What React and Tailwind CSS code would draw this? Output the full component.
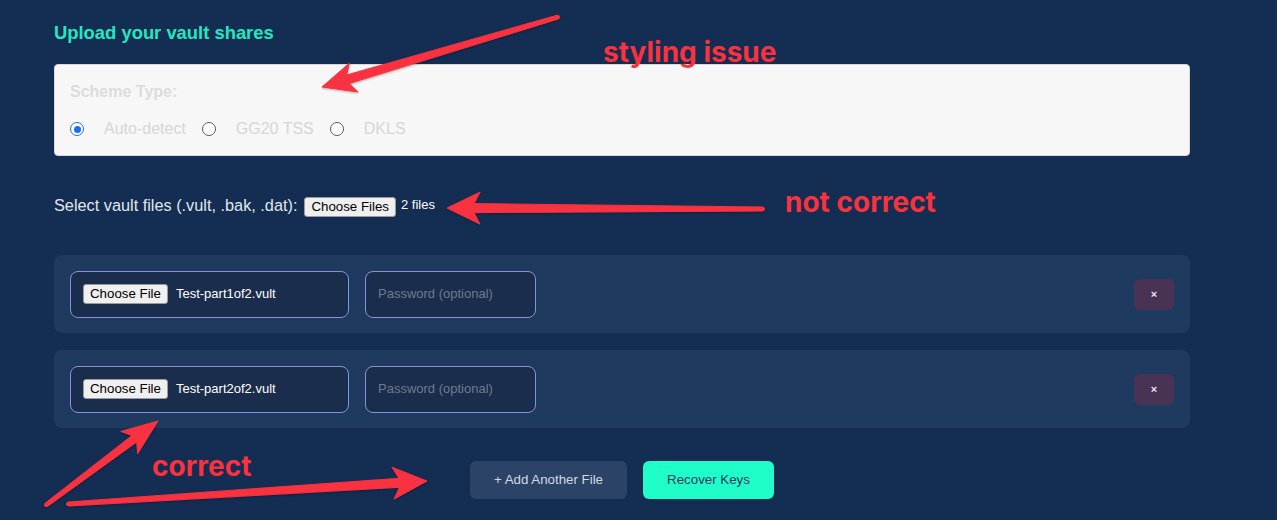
import React from "react";

const rows = [
  { name: "Test-part1of2.vult" },
  { name: "Test-part2of2.vult" },
];

const schemes = [
  { label: "Auto-detect", checked: true },
  { label: "GG20 TSS", checked: false },
  { label: "DKLS", checked: false },
];

// tapered annotation arrow, from tail t to tip p
function arrowPoints(t, p, w0, w1, headLen, headHalf) {
  const dx = p[0] - t[0];
  const dy = p[1] - t[1];
  const len = Math.hypot(dx, dy);
  const d = [dx / len, dy / len];
  const n = [-d[1], d[0]];
  const at = (base, k, s) => [base[0] + d[0] * k + n[0] * s, base[1] + d[1] * k + n[1] * s];
  const pts = [
    at(t, 0, w0 / 2),
    at(p, -headLen * 0.82, w1 / 2),
    at(p, -headLen, headHalf),
    p,
    at(p, -headLen, -headHalf),
    at(p, -headLen * 0.82, -w1 / 2),
    at(t, 0, -w0 / 2),
  ];
  return pts.map((q) => q[0].toFixed(1) + "," + q[1].toFixed(1)).join(" ");
}

const arrows = [
  { t: [558, 17], p: [322, 87], w0: 4, w1: 9, hl: 33, hh: 15 },
  { t: [763, 209], p: [447, 208], w0: 4, w1: 9, hl: 33, hh: 16 },
  { t: [46, 505], p: [158, 421], w0: 4, w1: 8, hl: 36, hh: 14 },
  { t: [68, 504], p: [427, 481], w0: 4, w1: 9, hl: 34, hh: 16 },
];

function FakeFileButton({ children }) {
  return (
    <span className="inline-flex h-[20px] items-center rounded-[3px] border border-[#9a9a9a] bg-[#efefef] px-[6px] text-[13.3px] text-black">
      {children}
    </span>
  );
}

function Radio({ checked }) {
  if (checked) {
    return (
      <span className="flex h-[14px] w-[14px] items-center justify-center rounded-full border-[1.5px] border-[#1a6fef] bg-white">
        <span className="h-[7px] w-[7px] rounded-full bg-[#1a6fef]" />
      </span>
    );
  }
  return <span className="h-[14px] w-[14px] rounded-full border border-[#5c5c5c] bg-white" />;
}

export default function App() {
  return (
    <div
      className="relative min-h-[520px] w-full overflow-hidden bg-[#132d53] pt-[21px] pl-[54px]"
      style={{ fontFamily: '"Liberation Sans", Arial, sans-serif' }}
    >
      <div className="w-[1136px]">
        <h2 className="text-[18.4px] leading-[24px] font-bold text-[#23e8bf]">
          Upload your vault shares
        </h2>

        {/* Scheme type card */}
        <div className="mt-[19px] h-[92px] rounded-[4px] border border-[#d9d9d9] bg-[#f7f7f7] px-[15px] pt-[18px]">
          <div className="text-[16px] leading-[18px] font-bold text-[#dcdcdc]">Scheme Type:</div>
          <div className="mt-[19px] flex h-[18px] items-center gap-4">
            {schemes.map((s) => (
              <label key={s.label} className="flex items-center gap-5">
                <Radio checked={s.checked} />
                <span className="text-[16px] text-[#d6d6d6]">{s.label}</span>
              </label>
            ))}
          </div>
        </div>

        {/* Select files */}
        <div className="mt-[39px] flex h-[20px] items-center text-[16.3px] text-[#e2e6ec]">
          <span>Select vault files (.vult, .bak, .dat):</span>
          <span className="ml-[7px]">
            <FakeFileButton>Choose Files</FakeFileButton>
          </span>
          <span className="ml-[5px] text-[13px] text-white">2 files</span>
        </div>

        {/* File rows */}
        <div className="mt-[40px] flex flex-col gap-[17px]">
          {rows.map((r) => (
            <div
              key={r.name}
              className="flex h-[78px] items-center rounded-[8px] bg-[#1f3a5f] px-[16px]"
            >
              <div className="flex h-[47px] w-[279px] items-center rounded-[8px] border border-[#8b90dc] bg-[#1a2d4d] px-[12px]">
                <FakeFileButton>Choose File</FakeFileButton>
                <span className="ml-[8px] text-[13px] text-white">{r.name}</span>
              </div>
              <div className="ml-[16px] flex h-[47px] w-[171px] items-center rounded-[8px] border border-[#8b90dc] bg-[#1a2d4d] px-[12px]">
                <span className="text-[13px] text-[#6e7a8c]">Password (optional)</span>
              </div>
              <button className="ml-auto flex h-[31px] w-[40px] items-center justify-center rounded-[6px] bg-[#4a3255] text-[11px] font-bold text-[#e8e8ee]">
                ×
              </button>
            </div>
          ))}
        </div>

        {/* Actions */}
        <div className="mt-[33px] flex justify-center gap-4">
          <button className="h-[38px] w-[157px] rounded-[6px] bg-[#2a4366] text-[13.3px] text-[#d3d9e2]">
            + Add Another File
          </button>
          <button className="h-[38px] w-[131px] rounded-[6px] bg-[#1ffdc9] text-[13.3px] text-[#1e3a5f]">
            Recover Keys
          </button>
        </div>
      </div>

      {/* Review annotations */}
      <svg className="pointer-events-none absolute inset-0" width="1277" height="520">
        <defs>
          <filter id="ash" x="-10%" y="-10%" width="120%" height="120%">
            <feDropShadow dx="0" dy="1" stdDeviation="1.2" floodColor="#000" floodOpacity="0.3" />
          </filter>
        </defs>
        {arrows.map((a, i) => (
          <g key={i} filter="url(#ash)">
            <polygon points={arrowPoints(a.t, a.p, a.w0, a.w1, a.hl, a.hh)} fill="#f8323f" strokeLinejoin="round" stroke="#f8323f" strokeWidth="1" />
            <circle cx={a.t[0]} cy={a.t[1]} r={a.w0 / 2} fill="#f8323f" />
          </g>
        ))}
      </svg>
      <div
        className="pointer-events-none absolute top-[38px] left-[603px] text-[28px] leading-none font-bold text-[#f8323f]"
        style={{ fontFamily: "Inter, sans-serif" }}
      >
        styling issue
      </div>
      <div
        className="pointer-events-none absolute top-[188px] left-[785px] text-[28px] leading-none font-bold text-[#f8323f]"
        style={{ fontFamily: "Inter, sans-serif" }}
      >
        not correct
      </div>
      <div
        className="pointer-events-none absolute top-[452px] left-[152px] text-[28px] leading-none font-bold text-[#f8323f]"
        style={{ fontFamily: "Inter, sans-serif" }}
      >
        correct
      </div>
    </div>
  );
}
